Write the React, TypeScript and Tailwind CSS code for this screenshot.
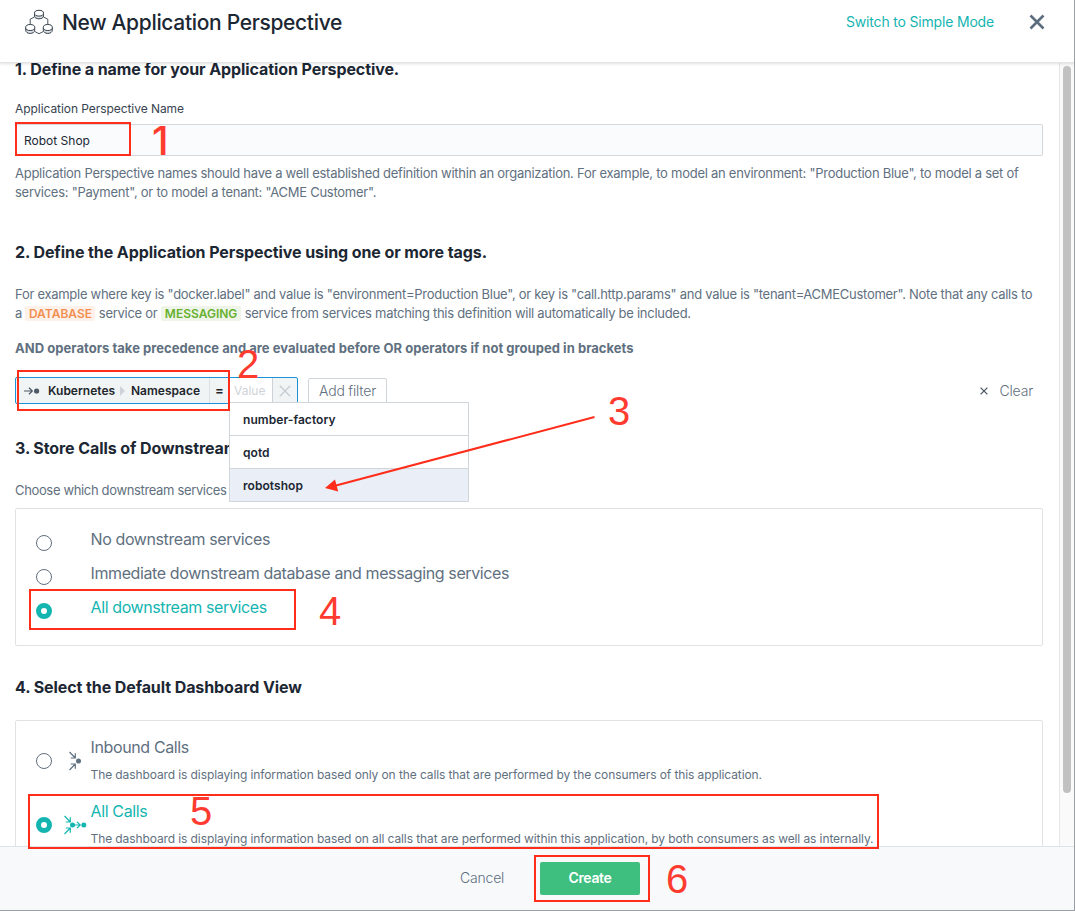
import type { ReactNode } from "react";

function Heading({ children, className = "" }: { children: ReactNode; className?: string }) {
  return (
    <h2 className={`h-5 whitespace-nowrap text-[16px] font-bold leading-[18px] tracking-[-0.09px] text-[#1c2733] ${className}`}>
      {children}
    </h2>
  );
}

function Radio({ on = false, className = "" }: { on?: boolean; className?: string }) {
  return (
    <span
      className={`block size-4 shrink-0 rounded-full ${on ? "border-[5px] border-[#14b5b1] bg-white" : "border border-[#617080] bg-white"} ${className}`}
    />
  );
}

function Option({ label, on = false }: { label: string; on?: boolean }) {
  return (
    <div className="flex h-[34px] pl-5">
      <Radio on={on} className="mt-[9px]" />
      <span className={`ml-[38.5px] h-[27px] whitespace-nowrap text-[16px] leading-[27px] tracking-[-0.39px] ${on ? "text-[#14b5b1]" : "text-[#5f7080]"}`}>{label}</span>
    </div>
  );
}

function CallOption({ label, desc, icon, on = false }: { label: string; desc: string; icon: ReactNode; on?: boolean }) {
  return (
    <div className="flex h-16 pl-5">
      <Radio on={on} className="mt-[24px]" />
      <div className="ml-[11px] mt-[20px] h-6 w-7 shrink-0">{icon}</div>
      <div className="-ml-[0.5px] flex flex-col">
        <span className={`mt-[8px] h-5 whitespace-nowrap text-[16px] leading-5 tracking-[-0.37px] ${on ? "text-[#14b5b1]" : "text-[#5f7080]"}`}>{label}</span>
        <span className="mt-[8px] h-5 whitespace-nowrap text-[12px] leading-5 tracking-[-0.098px] text-[#5f7080]">{desc}</span>
      </div>
    </div>
  );
}

function Arrows({ all = false }: { all?: boolean }) {
  const dx = all ? -0.5 : 4.5;
  return (
    <svg width="28" height="24" viewBox="0 0 28 24" fill="none" stroke={all ? "#14b5b1" : "#5f7080"} strokeWidth="1.2">
      <g transform={`translate(${dx} 0)`}>
        <path d="M2 3 7.800 9M7.800 4.200V9H3.200M2 21 7.800 15M7.800 19.800V15H3.200" />
      </g>
      <circle cx={all ? 9.5 : 15.5} cy="12" r="2.5" fill={all ? "#14b5b1" : "#5f7080"} stroke="none" />
      {all && (
        <>
          <path d="M10 12h7M14 8.800 17.200 12 14 15.200" />
          <circle cx="20.8" cy="12" r="2.5" fill="#14b5b1" stroke="none" />
        </>
      )}
    </svg>
  );
}

function Mark({ className, children }: { className: string; children: string }) {
  return (
    <span className={`absolute z-30 text-[40px] leading-10 text-[#ff3b30] ${className}`}>{children}</span>
  );
}

function Frame({ className }: { className: string }) {
  return <div className={`absolute z-30 border-2 border-[#ff2d1a] ${className}`} />;
}

export default function App() {
  return (
    <div className="relative flex h-[911px] w-[1075px] flex-col overflow-hidden border-b border-r border-[#9b9fa6] bg-white font-['Inter','Liberation_Sans',sans-serif]">
      <header className="relative z-10 flex h-[63px] shrink-0 border-b border-[#e2e5e8] bg-white shadow-[0_1px_3px_rgba(0,0,0,0.12)]">
        <svg className="ml-[24px] mt-[8px]" width="30" height="28" viewBox="0 0 30 28" fill="#dfe2e5" stroke="#35404b" strokeWidth="1">
          <path fill="none" d="M10.500 9 6.200 11.200v5M19.500 9l4.300 2.200v5M10.700 23.500l4.300 2.200 4.300-2.200" strokeWidth="0.900" />
          <path d="M10.500 5.300v2.600c0 1.800 2 2.900 4.500 2.900s4.500-1.100 4.500-2.900V5.300" />
          <ellipse fill="#fff" cx="15" cy="5.200" rx="4.500" ry="2.900" />
          <path d="M1.700 19.500v2.700c0 2 2 3.200 4.500 3.200s4.500-1.200 4.500-3.200v-2.700M19.300 19.500v2.700c0 2 2 3.200 4.500 3.200s4.500-1.200 4.500-3.200v-2.700" />
          <ellipse fill="#fff" cx="6.200" cy="19.500" rx="4.500" ry="3" />
          <ellipse fill="#fff" cx="23.800" cy="19.500" rx="4.500" ry="3" />
        </svg>
        <h1 className="ml-[8px] mt-[9px] h-7 flex-1 whitespace-nowrap text-[21px] font-medium leading-7 tracking-[-0.33px] text-[#1c2733]">New Application Perspective</h1>
        <a className="mt-[12px] h-5 whitespace-nowrap text-[14px] leading-5 tracking-[-0.18px] text-[#14b5b1]">Switch to Simple Mode</a>
        <svg className="ml-[35px] mr-[29px] mt-[14px]" width="16" height="16" viewBox="0 0 16 16" stroke="#5d6d80" strokeWidth="2.600">
          <path d="m1.500 1.500 13 13M14.500 1.500l-13 13" />
        </svg>
      </header>

      <div className="flex min-h-0 flex-1">
        <main className="flex w-[1059px] shrink-0 flex-col overflow-hidden pl-[15px] pr-4">
          <Heading className="-mt-[3px] shrink-0">1. Define a name for your Application Perspective.</Heading>
          <label className="mt-[20px] h-[18px] shrink-0 text-[12px] leading-[18px] tracking-[-0.06px] text-[#37434f]">Application Perspective Name</label>
          <div className="mt-[6px] flex h-8 shrink-0 items-center rounded-[2px] border border-[#d3d8dc] bg-[#fafbfd] pl-2 pt-px text-[12px] text-[#1c2733]">Robot Shop</div>
          <p className="mt-[8px] h-[38px] shrink-0 whitespace-nowrap text-[13px] leading-[19px] tracking-[-0.262px] text-[#5f7080]">
            Application Perspective names should have a well established definition within an organization. For example, to model an environment: "Production Blue", to model a set of<br />
            services: "Payment", or to model a tenant: "ACME Customer".
          </p>
          <Heading className="mt-[41px] shrink-0">2. Define the Application Perspective using one or more tags.</Heading>
          <p className="mt-[22px] h-[38px] shrink-0 whitespace-nowrap text-[13px] leading-[19px] tracking-[-0.278px] text-[#5f7080]">
            For example where key is "docker.label" and value is "environment=Production Blue", or key is "call.http.params" and value is "tenant=ACMECustomer". Note that any calls to<br />
            a <span className="rounded-[2px] bg-[#fdf1ea] px-[3.5px] text-[12px] font-semibold tracking-normal text-[#f28f50]">DATABASE</span> service or <span className="rounded-[2px] bg-[#eef5e8] px-[4px] text-[12px] font-semibold tracking-normal text-[#68b02f]">MESSAGING</span> service from services matching this definition will automatically be included.
          </p>
          <p className="mt-[15px] h-5 shrink-0 whitespace-nowrap text-[13px] font-bold leading-5 tracking-[0.035px] text-[#5f7080]">AND operators take precedence and are evaluated before OR operators if not grouped in brackets</p>

          <div className="mt-[19px] flex h-[27px] shrink-0">
            <div className="relative flex w-[283px] rounded-[2px] border border-[#1b91d6] bg-[#f0f4f5]">
              <div className="flex w-[194px] items-center border-r border-[#dce1e4] pl-[8px] text-[12px] font-semibold text-[#20262b]">
                <svg width="16" height="10" viewBox="0 0 16 10" fill="none" stroke="#4d5965" strokeWidth="1.200">
                  <path d="M0 5h8M5 1.800 8.300 5 5 8.200" />
                  <circle cx="12.600" cy="5" r="2.600" fill="#4d5965" stroke="none" />
                </svg>
                <span className="ml-[8px] w-[72px] whitespace-nowrap">Kubernetes</span>
                <svg width="5" height="10" viewBox="0 0 5 10" fill="#cdd3d8"><path d="M0 0 5 5 0 10z" /></svg>
                <span className="ml-[6px] whitespace-nowrap">Namespace</span>
              </div>
              <div className="flex w-[20px] items-center pl-[5px] text-[13px] font-semibold text-[#20262b]">=</div>
              <div className="flex w-[42px] items-center bg-white pl-[4px] text-[12px] text-[#cfd4d8]">Value</div>
              <div className="flex w-[25px] items-center justify-center border-l border-[#ccd3d8]">
                <svg width="12" height="12" viewBox="0 0 12 12" stroke="#c5ccd2" strokeWidth="1.300"><path d="m.8.8 10.400 10.400M11.200.8.8 11.200" /></svg>
              </div>
              <div className="absolute left-[213px] top-[24px] z-20 flex w-[240px] flex-col border border-[#d0d6da] bg-white text-[12px] font-semibold tracking-[0.06px] text-[#1c2733]">
                <div className="flex h-[33px] items-center border-b border-[#d0d6da] pl-[13px] pt-[2px]">number-factory</div>
                <div className="flex h-[33px] items-center border-b border-[#d0d6da] pl-[13px] pt-[2px]">qotd</div>
                <div className="flex h-[32px] items-center bg-[#eaeff7] pl-[13px] pt-[2px]">robotshop</div>
              </div>
            </div>
            <div className="ml-[10px] mt-px flex w-[79px] items-center justify-center rounded-[2px] border border-[#d0d6da] pb-px text-[14px] font-light tracking-[-0.2px] text-[#5f7080]">Add filter</div>
            <div className="ml-auto mr-[10px] flex items-center text-[14px] font-light tracking-[-0.2px] text-[#5f7080]">
              <svg className="mr-[12px]" width="8" height="8" viewBox="0 0 8 8" stroke="#4d5965" strokeWidth="1.300"><path d="m.6.6 6.800 6.800M7.400.6.6 7.400" /></svg>
              Clear
            </div>
          </div>

          <Heading className="mt-[35px] shrink-0">3. Store Calls of Downstream</Heading>
          <p className="mt-[22px] h-[18px] shrink-0 text-[13px] leading-[18px] tracking-[-0.35px] text-[#5f7080]">Choose which downstream services</p>
          <div className="mt-[9px] h-[138px] shrink-0 rounded-[2px] border border-[#e0e3e6] pt-[17px]">
            <Option label="No downstream services" />
            <Option label="Immediate downstream database and messaging services" />
            <Option label="All downstream services" on />
          </div>
          <Heading className="mt-[32px] shrink-0">4. Select the Default Dashboard View</Heading>
          <div className="mt-[22px] h-[170px] shrink-0 rounded-[2px] border border-[#e0e3e6] pt-[8px]">
            <CallOption label="Inbound Calls" desc="The dashboard is displaying information based only on the calls that are performed by the consumers of this application." icon={<Arrows />} />
            <CallOption label="All Calls" desc="The dashboard is displaying information based on all calls that are performed within this application, by both consumers as well as internally." icon={<Arrows all />} on />
          </div>
        </main>
        <div className="flex-1 border-l border-[#e6e6e6] bg-[#fafafa] pl-[3px] pt-[3px]">
          <div className="h-[727px] w-2 rounded-full bg-[#c1c1c1]" />
        </div>
      </div>

      <footer className="flex h-[64px] shrink-0 border-t border-[#e0e3e6] bg-[#f7f9fb]">
        <span className="ml-[460px] mt-[21px] h-5 w-[80px] text-[14px] font-light leading-5 tracking-[-0.2px] text-[#5f7080]">Cancel</span>
        <button className="mt-[15px] h-[33px] w-[100px] rounded-[2px] bg-[#3fbf7f] pb-[2px] text-[14px] font-semibold tracking-[-0.35px] text-white">Create</button>
      </footer>

      <Frame className="left-[15px] top-[122px] h-[34px] w-[116px]" />
      <Frame className="left-[17px] top-[370px] h-[41px] w-[213px]" />
      <Frame className="left-[29px] top-[589px] h-[41px] w-[267px]" />
      <Frame className="left-[28px] top-[794px] h-[55px] w-[851px]" />
      <Frame className="left-[534px] top-[855px] h-[47px] w-[116px]" />
      <Mark className="left-[152px] top-[121px] font-['Inter'] font-medium">1</Mark>
      <Mark className="left-[237px] top-[344px] font-['Liberation_Sans']">2</Mark>
      <Mark className="left-[608px] top-[391px] font-['Liberation_Sans']">3</Mark>
      <Mark className="left-[319px] top-[591px] font-['Liberation_Sans']">4</Mark>
      <Mark className="left-[190px] top-[791px] font-['Liberation_Sans']">5</Mark>
      <Mark className="left-[666px] top-[859px] font-['Liberation_Sans']">6</Mark>
      <svg className="absolute left-[320px] top-[410px] z-30" width="280" height="85" viewBox="320 410 280 85">
        <path d="M594.500 417 336 485.500" stroke="#ff2d1a" strokeWidth="2" />
        <path d="m325 488 10-8.500 3.200 12z" fill="#ff2d1a" />
      </svg>
    </div>
  );
}
